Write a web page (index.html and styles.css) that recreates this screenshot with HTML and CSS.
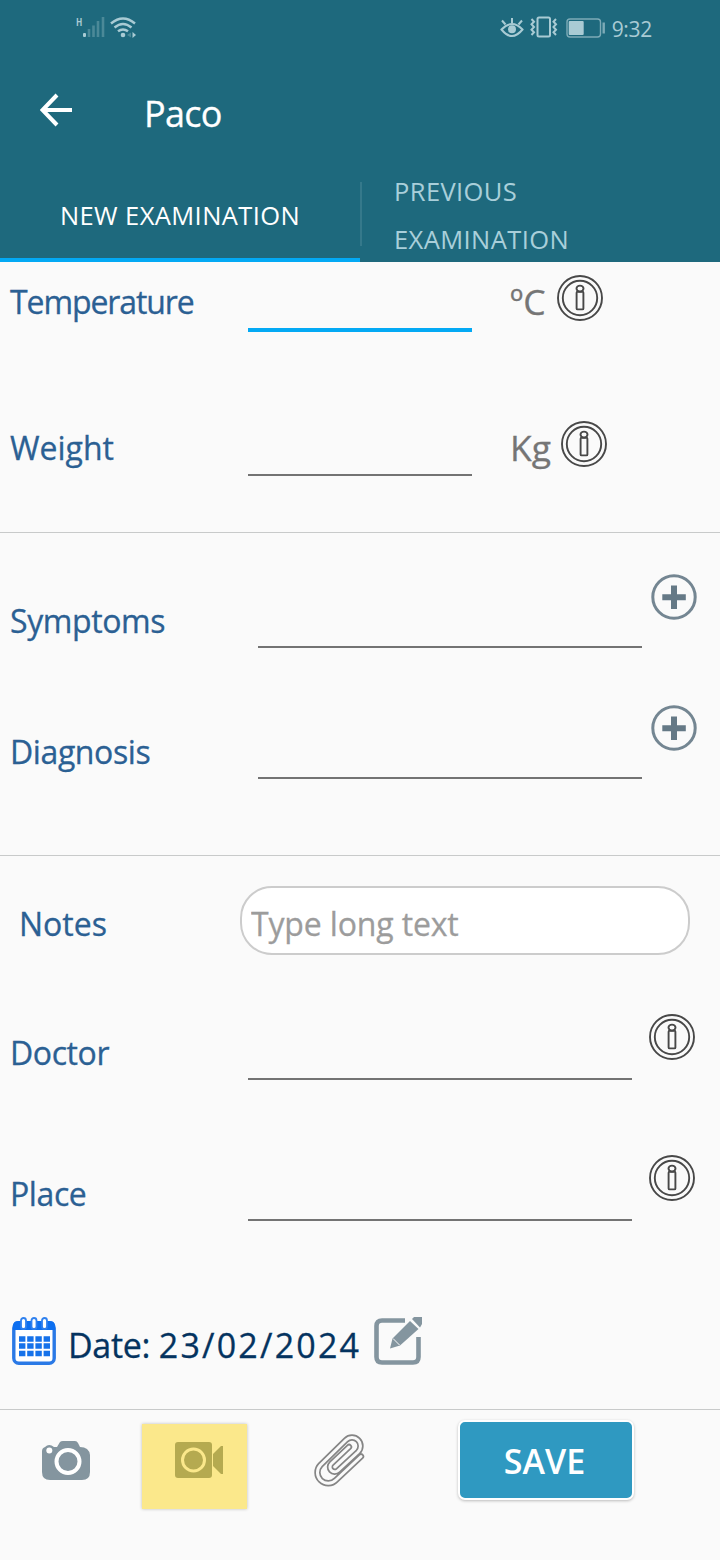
FILE: index.html
```html
<!DOCTYPE html>
<html lang="en">
<head>
  <meta charset="UTF-8" />
  <meta name="viewport" content="width=device-width, initial-scale=1.0"/>
  <title>Paco - New Examination</title>
  <link rel="stylesheet" href="styles.css">
</head>
<body>

<!-- shared icons -->
<svg class="sprite" width="0" height="0">
  <symbol id="info" viewBox="0 0 46 46">
    <g fill="none" stroke="#484848" stroke-width="1.9">
      <circle cx="23" cy="23" r="22"/>
      <circle cx="23" cy="23" r="17.2"/>
      <ellipse cx="23" cy="13.6" rx="3.5" ry="3"/>
      <rect x="19.6" y="16.8" width="6.8" height="17.6" rx="1"/>
    </g>
  </symbol>
  <symbol id="plus" viewBox="0 0 46 46">
    <circle cx="23" cy="23" r="21.2" fill="none" stroke="#748692" stroke-width="3"/>
    <path d="M23 11.500v23.500M11.300 23.200h23.500" stroke="#657986" stroke-width="6"/>
  </symbol>
</svg>

<header>
  <div class="status">
    <div class="status-left">
      <span class="network">H</span>
      <svg class="signal" width="22" height="22" viewBox="0 0 22 22">
        <rect x="0" y="16" width="3" height="4" rx="1" fill="#a9cbd4"/>
        <path d="M6 12v8M10.500 8.500v11.500M15 4v16M20 0v20" stroke="#4b8998" stroke-width="2.600"/>
      </svg>
      <svg width="28" height="22" viewBox="0 0 28 22">
        <g fill="none" stroke="#a9cbd4" stroke-width="2.400">
          <path d="M1 6.500Q13 -3.500 25 6.500"/>
          <path d="M4.500 10.500Q13 3.500 21.500 10.500"/>
          <path d="M8 14.300Q13 10.500 18 14.300"/>
        </g>
        <circle cx="13" cy="18" r="2.300" fill="#a9cbd4"/>
        <path d="M21 15.500v5l-4-2.500z" fill="#4b8998"/>
        <path d="M22.500 15v6l3.500-3z" fill="#a9cbd4"/>
      </svg>
    </div>
    <div class="status-right">
      <svg width="24" height="22" viewBox="0 0 24 22">
        <g fill="none" stroke="#a9cbd4" stroke-width="2">
          <path d="M1.500 12.500Q12 1.500 22.500 12.500Q12 25.500 1.500 12.500z"/>
          <path d="M12 6V1M5.500 7.500L2 3.500M18.500 7.500L22 3.500"/>
        </g>
        <circle cx="12" cy="12.300" r="4" fill="#a9cbd4"/>
      </svg>
      <svg class="vibrate" width="28" height="22" viewBox="0 0 28 22">
        <g fill="none" stroke="#a9cbd4" stroke-width="2">
          <rect x="7.500" y="1.500" width="12.500" height="19" rx="1.500"/>
          <path d="M1.500 3l2.500 2.700l-2.500 2.600l2.500 2.700l-2.500 2.700l2.500 2.600l-2.500 2.700M26 3l-2.500 2.700l2.500 2.600l-2.500 2.700l2.500 2.700l-2.500 2.600l2.500 2.700"/>
        </g>
      </svg>
      <svg class="battery" width="40" height="20" viewBox="0 0 40 20">
        <rect x="1" y="1" width="33.500" height="18" rx="3" fill="none" stroke="#7dabb7" stroke-width="1.400"/>
        <rect x="2.700" y="3" width="15" height="14" rx="1" fill="#a9cbd4"/>
        <path d="M37.700 4.500v11" stroke="#7dabb7" stroke-width="2.400"/>
      </svg>
      <span class="time">9:32</span>
    </div>
  </div>

  <div class="toolbar">
    <svg width="34" height="34" viewBox="0 0 34 34">
      <path d="M32 17H3M17 2L2.500 17L17 32" fill="none" stroke="#fff" stroke-width="4"/>
    </svg>
    <h1>Paco</h1>
  </div>

  <nav>
    <a class="tab active" href="#new">NEW EXAMINATION</a>
    <a class="tab previous" href="#previous">PREVIOUS EXAMINATION</a>
  </nav>
</header>

<main>
  <section class="vitals">
    <div class="row">
      <label class="label temperature" for="temperature">Temperature</label>
      <input class="field focused" type="text" id="temperature">
      <span class="unit celsius">ºC</span>
      <svg class="icon"><use href="#info"/></svg>
    </div>
    <div class="row">
      <label class="label weight" for="weight">Weight</label>
      <input class="field" type="text" id="weight">
      <span class="unit">Kg</span>
      <svg class="icon"><use href="#info"/></svg>
    </div>
  </section>

  <section class="findings">
    <div class="row">
      <label class="label" for="symptoms">Symptoms</label>
      <input class="field" type="text" id="symptoms">
      <svg class="icon"><use href="#plus"/></svg>
    </div>
    <div class="row">
      <label class="label" for="diagnosis">Diagnosis</label>
      <input class="field" type="text" id="diagnosis">
      <svg class="icon"><use href="#plus"/></svg>
    </div>
  </section>

  <section class="details">
    <div class="notes">
      <label class="label" for="notes">Notes</label>
      <input class="notes-input" type="text" id="notes" placeholder="Type long text">
    </div>
    <div class="row">
      <label class="label" for="doctor">Doctor</label>
      <input class="field" type="text" id="doctor">
      <svg class="icon"><use href="#info"/></svg>
    </div>
    <div class="row">
      <label class="label" for="place">Place</label>
      <input class="field" type="text" id="place">
      <svg class="icon"><use href="#info"/></svg>
    </div>
    <div class="date">
      <svg width="44" height="48" viewBox="0 0 44 48">
        <rect x="1.800" y="6" width="40.400" height="40.200" rx="5" fill="#fff" stroke="#2a79e6" stroke-width="3.400"/>
        <path d="M1 13V9q0-5 5-5h32q5 0 5 5v4z" fill="#0d6ff0"/>
        <g fill="#fff" stroke="#2f80ee" stroke-width="1.800">
          <rect x="9" y="1" width="5" height="11" rx="2.500"/>
          <rect x="19.500" y="1" width="5" height="11" rx="2.500"/>
          <rect x="30" y="1" width="5" height="11" rx="2.500"/>
        </g>
        <path d="M7 22h31M7 29h31M7 36.500h31" stroke="#1672ea" stroke-width="5.500" stroke-dasharray="6.400 1.800"/>
      </svg>
      <span class="date-text">Date: <span class="date-value">23/02/2024</span></span>
      <svg class="edit" width="48" height="48" viewBox="0 0 48 48">
        <path d="M31 3.500H8q-5.500 0-5.500 5.500v31q0 5.500 5.500 5.500h31q5.500 0 5.500-5.500V20" fill="none" stroke="#84959f" stroke-width="4.600"/>
        <path d="M16 31.500l2.500-10L36 4l8.500 8L26 28.500z" fill="#84959f"/>
        <path d="M38 2l2-2h8v7l-2 3.500z" fill="#84959f"/>
        <path d="M19 21.500l6.500 6.500" stroke="#fafafa" stroke-width="1"/>
      </svg>
    </div>
  </section>
</main>

<footer>
  <button class="tool" aria-label="Take photo">
    <svg width="48" height="39" viewBox="0 0 48 39">
      <path d="M0 10q0-3 3-4q4-4 9 0h3l3-5q1-1 3-1h12q2 0 3 2l2 4q9 0 10 8v17q0 8-8 8H8q-8 0-8-8z" fill="#84959f"/>
      <circle cx="26" cy="20.500" r="11.500" fill="none" stroke="#fff" stroke-width="4"/>
      <circle cx="7.300" cy="9.500" r="3" fill="#fff"/>
    </svg>
  </button>
  <button class="tool video" aria-label="Record video">
    <svg width="48" height="36" viewBox="0 0 48 36">
      <rect width="37" height="36" rx="3" fill="#b5aa50"/>
      <path d="M38 12L46 4h2v28h-2l-8-8z" fill="#b5aa50"/>
      <circle cx="18.500" cy="18" r="11" fill="none" stroke="#fbe88b" stroke-width="3"/>
    </svg>
  </button>
  <button class="tool clip" aria-label="Attach file">
    <svg width="52" height="56" viewBox="0 0 52 56">
      <!-- grey wire with a lighter core -->
      <g fill="none" stroke-linecap="round" stroke-linejoin="round">
        <path d="M47 24.500L22 48A10.500 10.500 0 0 1 6.500 33L32 8A8.300 8.300 0 0 1 44 20L24 38.500A4.700 4.700 0 0 1 17.500 31.500L35 15" stroke="#858585" stroke-width="6.400"/>
        <path d="M47 24.500L22 48A10.500 10.500 0 0 1 6.500 33L32 8A8.300 8.300 0 0 1 44 20L24 38.500A4.700 4.700 0 0 1 17.500 31.500L35 15" stroke="#fafafa" stroke-width="3"/>
      </g>
    </svg>
  </button>
  <button class="save">SAVE</button>
</footer>

</body>
</html>
```

FILE: styles.css
```css
:root {
  --primary: #1e697d;
  --accent: #03a9f4;
  --bg: #fafafa;
  --label: #2b6093;
}
* {
  box-sizing: border-box;
}
body {
  margin: 0;
  width: 720px;
  min-height: 1560px;
  font-family: "Open Sans", "Noto Sans", sans-serif;
  background-color: var(--bg);
}
svg {
  display: block;
  flex-shrink: 0;
}
.sprite {
  position: absolute;
}
header {
  height: 262px;
  background-color: var(--primary);
  color: white;
}
.status {
  display: flex;
  justify-content: space-between;
  height: 56px;
  padding: 17px 68px 0 76px;
  color: #a9cbd4;
}
.status-left, .status-right {
  display: flex;
  align-items: flex-start;
}
.network {
  width: 7px;
  font-size: 11px;
  line-height: 10px;
  font-weight: bold;
  transform: scaleX(0.75);
  transform-origin: left;
}
.signal {
  margin-right: 5px;
}
.vibrate {
  margin: -1px 0 0 6px;
}
.battery {
  margin: 1px 0 0 8px;
}
.time {
  margin-left: 6px;
  font-size: 21px;
  line-height: 24px;
  letter-spacing: -0.3px;
}
.toolbar {
  display: flex;
  height: 112px;
  padding: 37px 40px 0;
}
.toolbar h1 {
  margin: -3px 0 0 70px;
  font-size: 36px;
  font-weight: normal;
  line-height: 48px;
  letter-spacing: -0.7px;
  -webkit-text-stroke: 0.3px;
}
nav {
  display: flex;
  height: 94px;
}
.tab {
  width: 360px;
  padding-top: 23px;
  font-size: 25.500px;
  line-height: 48px;
  letter-spacing: 0.4px;
  text-align: center;
  text-decoration: none;
  color: white;
}
.tab.active {
  border-bottom: 4px solid var(--accent);
}
.tab.previous {
  height: 93px;
  margin-top: -1px;
  padding: 0 120px 0 34px;
  text-align: left;
  color: #a9cfda;
  background: linear-gradient(#35798b, #35798b) 0 15px / 2px 64px no-repeat;
}
section {
  border-bottom: 1px solid #c8caca;
}
.row {
  display: flex;
  align-items: flex-start;
}
.label {
  width: 238px;
  margin-left: 10px;
  font-size: 32px;
  line-height: 40px;
  letter-spacing: -0.4px;
  color: var(--label);
  -webkit-text-stroke: 0.3px;
}
.label.temperature {
  letter-spacing: -1.1px;
}
.label.weight {
  letter-spacing: 0;
}
.field {
  width: 384px;
  height: 66px;
  padding: 0 8px;
  border: none;
  border-bottom: 2px solid #737373;
  background: none;
  font: inherit;
  font-size: 32px;
  outline: none;
}
.field.focused {
  border-bottom: 4px solid var(--accent);
}
.icon {
  width: 46px;
  height: 46px;
}
.vitals {
  height: 271px;
}
.vitals .row {
  height: 146px;
}
.vitals .label {
  margin-top: 20px;
}
.vitals .field {
  width: 224px;
  height: 68px;
}
.vitals .field.focused {
  height: 70px;
}
.unit {
  width: 51px;
  margin: 19px 0 0 38px;
  font-size: 35.500px;
  line-height: 40px;
  color: #757575;
  -webkit-text-stroke: 0.3px;
}
.unit.celsius {
  width: 47px;
}
.vitals .icon {
  margin-top: 13px;
}
.findings {
  height: 323px;
  padding-top: 41px;
}
.findings .row {
  height: 131px;
}
.findings .label {
  width: 248px;
  margin-top: 27px;
}
.findings .field {
  height: 74px;
}
.findings .icon {
  margin-left: 9px;
}
.details {
  height: 554px;
  padding-top: 30px;
}
.notes {
  display: flex;
  height: 128px;
}
.notes .label {
  width: 221px;
  margin: 18px 0 0 19px;
  letter-spacing: 0;
}
.notes-input {
  width: 450px;
  height: 69px;
  padding: 6px 9px 0;
  border: 2px solid #ccc;
  border-radius: 32px;
  background-color: white;
  font: inherit;
  font-size: 32px;
  letter-spacing: -0.15px;
}
.notes-input::placeholder {
  color: #9c9c9c;
  -webkit-text-stroke: 0.3px;
}
.details .row {
  height: 141px;
}
.details .row .label {
  margin-top: 19px;
}
.details .icon {
  margin-left: 17px;
}
.date {
  display: flex;
  padding: 21px 0 0 12px;
}
.date-text {
  width: 306px;
  margin: 8px 0 0 12px;
  font-size: 34px;
  line-height: 40px;
  letter-spacing: -0.3px;
  color: #04335f;
  white-space: nowrap;
  -webkit-text-stroke: 0.3px;
}
.date-value {
  letter-spacing: 2.200px;
}
footer {
  display: flex;
  height: 150px;
}
.tool {
  display: flex;
  justify-content: center;
  width: 48px;
  height: 85px;
  margin: 14px 0 0 42px;
  padding: 17px 0 0;
  border: none;
  background: none;
}
.tool.video {
  width: 105px;
  margin-left: 52px;
  padding: 18px 0 0 8px;
  background-color: #fbe88b;
  box-shadow: 0 0 3px rgba(0,0,0,0.25);
}
.tool.clip {
  width: 52px;
  margin-left: 67px;
  padding-top: 8px;
}
.save {
  width: 176px;
  height: 80px;
  margin: 10px 0 0 92px;
  padding: 2px 3px 0 0;
  border: 2px solid white;
  border-radius: 7px;
  background-color: #2f99c1;
  box-shadow: 0 1px 3px rgba(0,0,0,0.25);
  color: white;
  font: inherit;
  font-size: 34px;
  font-weight: 600;
}
```
